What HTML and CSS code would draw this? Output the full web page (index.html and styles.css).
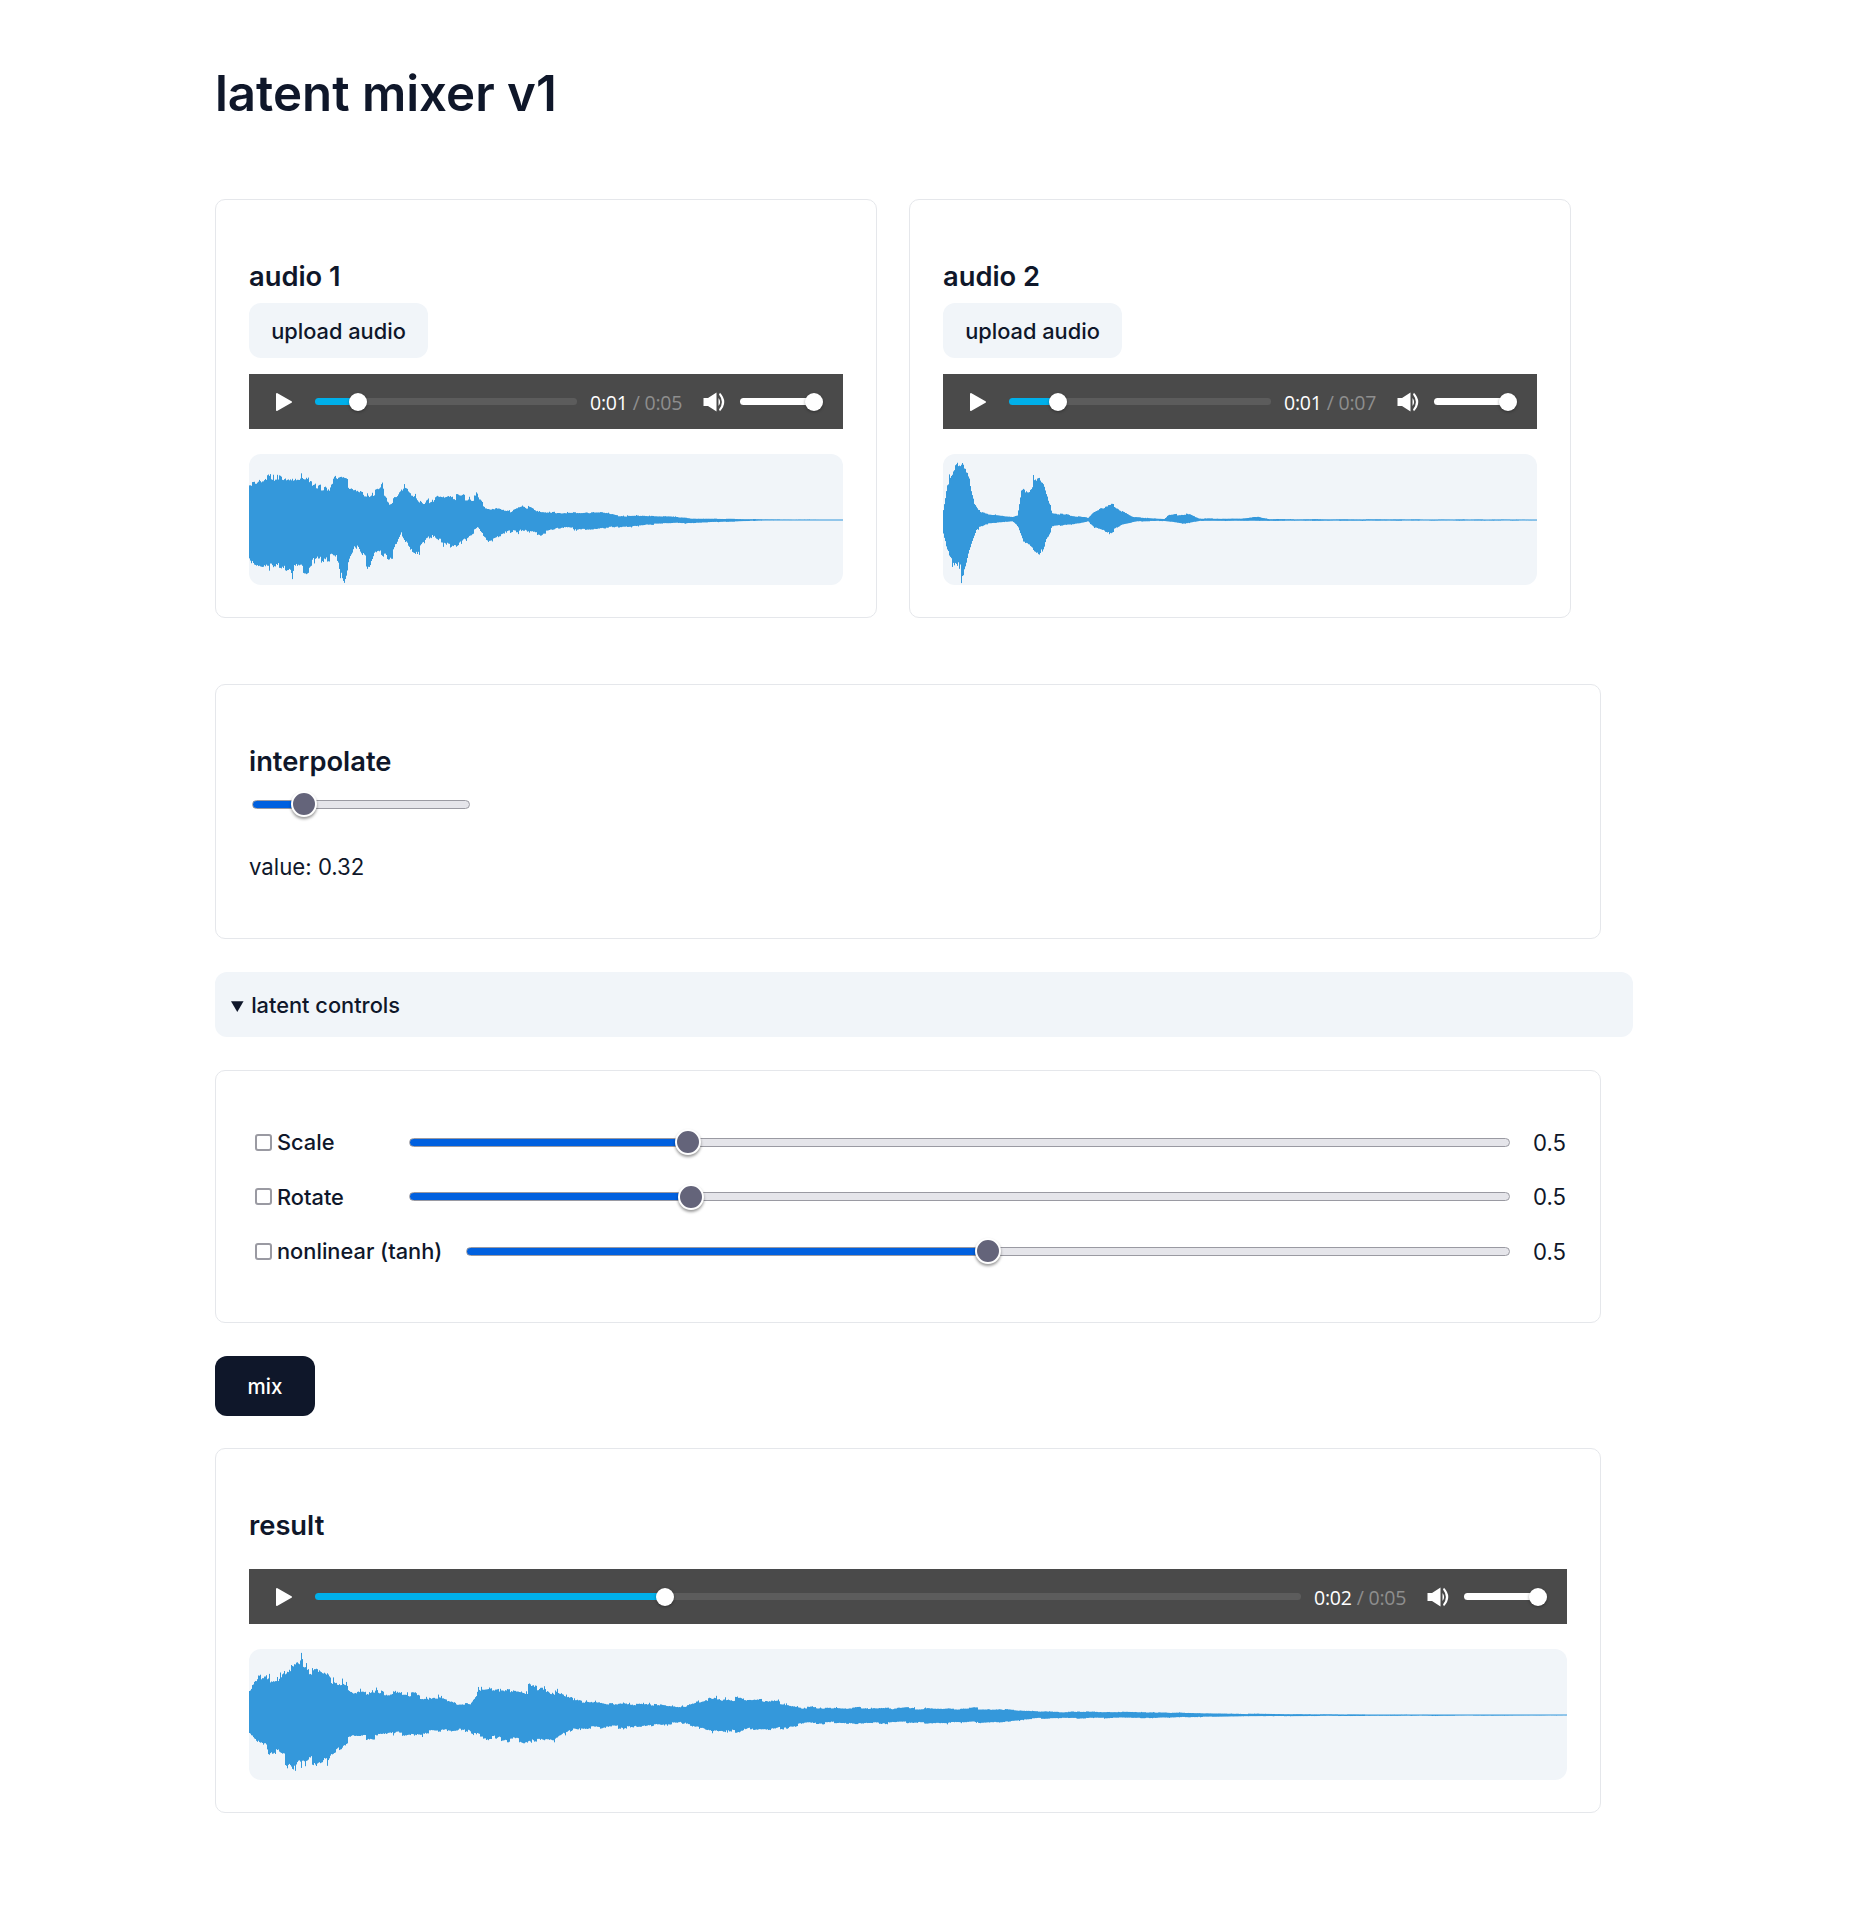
FILE: index.html
```html
<!DOCTYPE html>
<html>

<head>
    <meta charset="UTF-8">
    <title>latent mixer v1</title>
    <link rel="stylesheet" href="styles.css">
</head>

<body>
    <main class="page">
        <h1>latent mixer v1</h1>

        <div class="sources">
            <section class="card">
                <h2>audio 1</h2>
                <button class="upload-btn">upload audio</button>
                <div class="player">
                    <svg class="play-icon" viewBox="0 0 18 20"><path d="M2 2 L16 10 L2 18 Z" /></svg>
                    <input class="seek" type="range" min="0" max="1" step="0.001" value="0.14">
                    <span class="time"><span class="time-now">0:01</span> / 0:05</span>
                    <svg class="volume-icon" viewBox="0 0 24 20"><path d="M0.500 6 H5 L13.500 0.500 V19.500 L5 14 H0.500 Z M15.500 6 Q18.800 10 15.500 14 Z M17 0.800 Q25.500 10 17 19.200 L16 17.500 Q21.800 10 16 2.500 Z" /></svg>
                    <input class="volume" type="range" min="0" max="1" step="0.01" value="1">
                </div>
                <canvas class="wave-canvas" id="wave-1"></canvas>
            </section>

            <section class="card">
                <h2>audio 2</h2>
                <button class="upload-btn">upload audio</button>
                <div class="player">
                    <svg class="play-icon" viewBox="0 0 18 20"><path d="M2 2 L16 10 L2 18 Z" /></svg>
                    <input class="seek" type="range" min="0" max="1" step="0.001" value="0.165">
                    <span class="time"><span class="time-now">0:01</span> / 0:07</span>
                    <svg class="volume-icon" viewBox="0 0 24 20"><path d="M0.500 6 H5 L13.500 0.500 V19.500 L5 14 H0.500 Z M15.500 6 Q18.800 10 15.500 14 Z M17 0.800 Q25.500 10 17 19.200 L16 17.500 Q21.800 10 16 2.500 Z" /></svg>
                    <input class="volume" type="range" min="0" max="1" step="0.01" value="1">
                </div>
                <canvas class="wave-canvas" id="wave-2"></canvas>
            </section>
        </div>

        <section class="panel interpolate">
            <h2>interpolate</h2>
            <input class="slider slider-short" type="range" min="0" max="1" step="0.01" value="0.2">
            <p class="value-text">value: 0.32</p>
        </section>

        <details class="latent" open>
            <summary>latent controls</summary>
            <section class="panel controls">
                <div class="control-row">
                    <label class="control-label"><input type="checkbox">Scale</label>
                    <input class="slider" type="range" min="0" max="1" step="0.001" value="0.247">
                    <span class="control-value">0.5</span>
                </div>
                <div class="control-row">
                    <label class="control-label"><input type="checkbox">Rotate</label>
                    <input class="slider" type="range" min="0" max="1" step="0.001" value="0.25">
                    <span class="control-value">0.5</span>
                </div>
                <div class="control-row">
                    <label class="control-label"><input type="checkbox">nonlinear (tanh)</label>
                    <input class="slider" type="range" min="0" max="1" step="0.001" value="0.5">
                    <span class="control-value">0.5</span>
                </div>
            </section>
        </details>

        <button class="mix-btn">mix</button>

        <section class="panel result">
            <h2>result</h2>
            <div class="player">
                <svg class="play-icon" viewBox="0 0 18 20"><path d="M2 2 L16 10 L2 18 Z" /></svg>
                <input class="seek" type="range" min="0" max="1" step="0.001" value="0.352">
                <span class="time"><span class="time-now">0:02</span> / 0:05</span>
                <svg class="volume-icon" viewBox="0 0 24 20"><path d="M0.500 6 H5 L13.500 0.500 V19.500 L5 14 H0.500 Z M15.500 6 Q18.800 10 15.500 14 Z M17 0.800 Q25.500 10 17 19.200 L16 17.500 Q21.800 10 16 2.500 Z" /></svg>
                <input class="volume" type="range" min="0" max="1" step="0.01" value="1">
            </div>
            <canvas class="wave-canvas" id="wave-3"></canvas>
        </section>
    </main>
    <script src="app.js"></script>
</body>

</html>
```

FILE: styles.css
```css
* {
    box-sizing: border-box;
}

body {
    margin: 0;
    background-color: #fff;
    color: #0f172a;
    font-family: "Inter", "Liberation Sans", sans-serif;
    font-size: 22.200px;
}

.page {
    width: 1418px;
    margin: 0 0 0 215px;
    padding: 63px 0 117px;
}

h1 {
    margin: 0 0 76px;
    font-size: 49.200px;
    line-height: 60px;
    font-weight: 600;
}

h2 {
    margin: 28px 0 10px;
    font-size: 27.300px;
    line-height: 33px;
    font-weight: 600;
}

.sources {
    display: flex;
    gap: 32px;
    margin-bottom: 66px;
}

.card,
.panel {
    border: 1px solid #e5e7eb;
    border-radius: 10px;
    padding: 32px 33px;
}

.card {
    width: 662px;
}

.panel {
    width: 1386px;
}

.upload-btn {
    display: block;
    width: 179px;
    height: 55px;
    margin-bottom: 16px;
    border: none;
    border-radius: 12px;
    background-color: #f1f5f9;
    color: #0f172a;
    font-family: inherit;
    font-size: 21.800px;
    font-weight: 500;
}

/* audio player */
.player {
    display: flex;
    align-items: center;
    height: 55px;
    padding: 0 20px 0 26px;
    background-color: #4a4a4a;
}

.play-icon {
    flex: none;
    width: 18px;
    height: 20px;
    margin-right: 22px;
}

.play-icon path {
    fill: #fff;
    stroke: #fff;
    stroke-width: 2;
    stroke-linejoin: round;
}

.time {
    flex: none;
    width: 93px;
    margin-left: 13px;
    padding-top: 2px;
    font-family: "Open Sans", sans-serif;
    font-size: 19.500px;
    letter-spacing: -0.2px;
    white-space: nowrap;
    color: #8e8e8e;
}

.time-now {
    color: #fff;
}

.volume-icon {
    flex: none;
    width: 24px;
    height: 20px;
    margin: 0 13px 0 20px;
    fill: #fff;
}

.seek,
.volume,
.slider {
    -webkit-appearance: none;
    appearance: none;
    display: block;
    margin: 0;
    padding: 0;
    background: transparent;
}

.seek {
    flex: 1;
    min-width: 0;
    height: 18px;
}

.volume {
    flex: none;
    width: 83px;
    height: 18px;
}

.seek::-webkit-slider-runnable-track,
.volume::-webkit-slider-runnable-track {
    height: 7px;
    border-radius: 4px;
}

.seek::-webkit-slider-runnable-track {
    background: linear-gradient(to right, #00b0ea calc(9px + (100% - 18px) * var(--v)), #5c5c5c 0);
}

.volume::-webkit-slider-runnable-track {
    background: linear-gradient(to right, #fff calc(9px + (100% - 18px) * var(--v)), #5c5c5c 0);
}

.seek::-webkit-slider-thumb,
.volume::-webkit-slider-thumb {
    -webkit-appearance: none;
    width: 18px;
    height: 18px;
    margin-top: -5.500px;
    border-radius: 50%;
    background-color: #fff;
    box-shadow: 0 1px 3px rgba(0, 0, 0, 0.35);
}

.wave-canvas {
    display: block;
    width: 100%;
    height: 131px;
    margin-top: 25px;
    border-radius: 12px;
    background-color: #f1f5f9;
}

/* sliders */
.slider {
    flex: 1;
    min-width: 0;
    height: 26px;
}

.slider-short {
    width: 218px;
    margin: 13px 0 0 3px;
}

.slider::-webkit-slider-runnable-track {
    height: 9px;
    border: 1px solid #9a9aa2;
    border-radius: 5px;
    background: linear-gradient(to right, #0060df calc(12px + (100% - 24px) * var(--v)), #e5e5ea 0);
}

.slider::-webkit-slider-thumb {
    -webkit-appearance: none;
    width: 26px;
    height: 26px;
    margin-top: -9.500px;
    border: 2px solid #fff;
    border-radius: 50%;
    background-color: #64647a;
    box-shadow: 0 2px 3px rgba(0, 0, 0, 0.4);
}

.interpolate {
    height: 255px;
    margin-bottom: 33px;
}

.value-text {
    margin: 35px 0 0;
    line-height: 30px;
}

.latent summary {
    display: list-item;
    height: 65px;
    padding: 0 16px;
    border-radius: 12px;
    background-color: #f1f5f9;
    font-size: 21.800px;
    font-weight: 500;
    line-height: 66px;
    cursor: pointer;
}

.latent summary::marker {
    font-size: 19px;
}

.controls {
    height: 253px;
    margin-top: 33px;
    padding-top: 44px;
}

.control-row {
    display: flex;
    align-items: center;
    height: 54.500px;
    padding-left: 6px;
}

.control-label {
    display: flex;
    align-items: center;
    min-width: 130px;
    margin-right: 24px;
    font-size: 21.800px;
    font-weight: 500;
}

.control-label input {
    -webkit-appearance: none;
    appearance: none;
    width: 17px;
    height: 17px;
    margin: 0 5px 0 0;
    border: 2px solid #9a9aa2;
    border-radius: 3px;
    background-color: #fff;
}

.control-value {
    flex: none;
    width: 34px;
    margin-left: 23px;
}

.mix-btn {
    display: block;
    width: 100px;
    height: 60px;
    margin: 33px 0 32px;
    border: none;
    border-radius: 12px;
    background-color: #0f172a;
    color: #fff;
    font-family: inherit;
    font-size: 20.500px;
    font-weight: 500;
}

.result h2 {
    margin-bottom: 27px;
}
```

FILE: app.js
```js
// range inputs paint their own fill from --v
document.querySelectorAll('input[type=range]').forEach(input => {
    const update = () => {
        const v = (input.value - input.min) / (input.max - input.min);
        input.style.setProperty('--v', v);
    };
    input.addEventListener('input', update);
    update();
});

const waves = {
    'wave-1': {
        x0: 110, xw: 1328, cy: 990, half: 196, seed: 7,
        top: [[110, 850], [180, 845], [240, 865], [290, 868], [305, 830], [340, 860], [370, 900], [405, 875], [425, 930], [460, 880], [500, 940], [530, 895], [575, 910], [620, 915], [640, 950], [690, 960], [720, 935], [760, 965], [900, 965], [930, 975], [1050, 975], [1100, 985], [1250, 987], [1438, 989]],
        bottom: [[110, 1130], [120, 1170], [185, 1180], [250, 1145], [300, 1120], [322, 1180], [345, 1080], [375, 1155], [390, 1100], [430, 1125], [450, 1040], [480, 1110], [520, 1040], [560, 1085], [620, 1020], [645, 1065], [700, 1025], [750, 1040], [800, 1020], [930, 1018], [1000, 1005], [1100, 1000], [1250, 992], [1438, 991]]
    },
    'wave-2': {
        x0: 96, xw: 1329, cy: 990, half: 196, seed: 23,
        top: [[96, 950], [105, 860], [125, 810], [140, 800], [155, 850], [165, 930], [180, 965], [250, 980], [262, 975], [270, 890], [295, 860], [310, 850], [325, 900], [340, 965], [420, 982], [432, 960], [450, 945], [475, 935], [495, 960], [520, 980], [590, 987], [600, 975], [640, 968], [670, 985], [760, 985], [800, 980], [825, 987], [1425, 988]],
        bottom: [[96, 1040], [105, 1100], [125, 1150], [140, 1155], [155, 1080], [170, 1020], [190, 1005], [250, 995], [262, 1010], [275, 1070], [310, 1115], [325, 1060], [340, 1015], [420, 995], [432, 1015], [470, 1035], [500, 1005], [530, 995], [590, 993], [640, 1003], [670, 993], [1425, 992]]
    },
    'wave-3': {
        x0: 96, xw: 2583, cy: 462, half: 195, seed: 41,
        top: [[96, 385], [115, 340], [150, 345], [180, 300], [240, 305], [260, 340], [300, 385], [400, 385], [530, 425], [545, 380], [680, 365], [720, 405], [800, 420], [950, 435], [985, 408], [1120, 410], [1180, 435], [1568, 440], [1642, 450], [1849, 452], [2047, 458], [2272, 460], [2679, 461]],
        bottom: [[96, 520], [125, 575], [185, 635], [255, 600], [290, 545], [400, 525], [525, 515], [550, 540], [690, 555], [730, 510], [800, 505], [950, 490], [1000, 515], [1130, 510], [1190, 490], [1552, 488], [1642, 474], [1849, 472], [2047, 466], [2272, 465], [2679, 464]]
    }
};

function lerp(points, x) {
    for (let i = 1; i < points.length; i++) {
        if (x <= points[i][0]) {
            const a = points[i - 1];
            const b = points[i];
            return a[1] + (b[1] - a[1]) * (x - a[0]) / (b[0] - a[0]);
        }
    }
    return points[points.length - 1][1];
}

function drawWave(id, wave) {
    const canvas = document.getElementById(id);
    const w = canvas.clientWidth;
    const h = canvas.clientHeight;
    canvas.width = w;
    canvas.height = h;
    const ctx = canvas.getContext('2d');
    ctx.fillStyle = '#3498db';

    let seed = wave.seed;
    const rand = () => {
        seed = (seed * 16807) % 2147483647;
        return seed / 2147483647;
    };

    const mid = Math.round(h / 2);
    const scale = (h / 2) / wave.half;
    let slowUp = 1;
    let slowDown = 1;
    let midUp = 1;
    let midDown = 1;
    for (let px = 0; px < w; px++) {
        const x = wave.x0 + (px / w) * wave.xw;
        if (px % 3 === 0) {
            slowUp = 0.88 + rand() * 0.12;
            slowDown = 0.88 + rand() * 0.12;
        }
        if (px % 9 === 0) {
            midUp = 0.78 + rand() * 0.28;
            midDown = 0.78 + rand() * 0.28;
        }
        const spikeUp = rand() < 0.05 ? 1.1 : 0.95 + rand() * 0.05;
        const spikeDown = rand() < 0.05 ? 1.1 : 0.95 + rand() * 0.05;
        const up = (wave.cy - lerp(wave.top, x)) * scale * slowUp * midUp * spikeUp;
        const down = (lerp(wave.bottom, x) - wave.cy) * scale * slowDown * midDown * spikeDown;
        const topY = mid - Math.max(up, 0.5);
        ctx.fillRect(px, topY, 1, Math.max(up, 0.5) + Math.max(down, 0.5));
    }
}

Object.keys(waves).forEach(id => drawWave(id, waves[id]));
```
